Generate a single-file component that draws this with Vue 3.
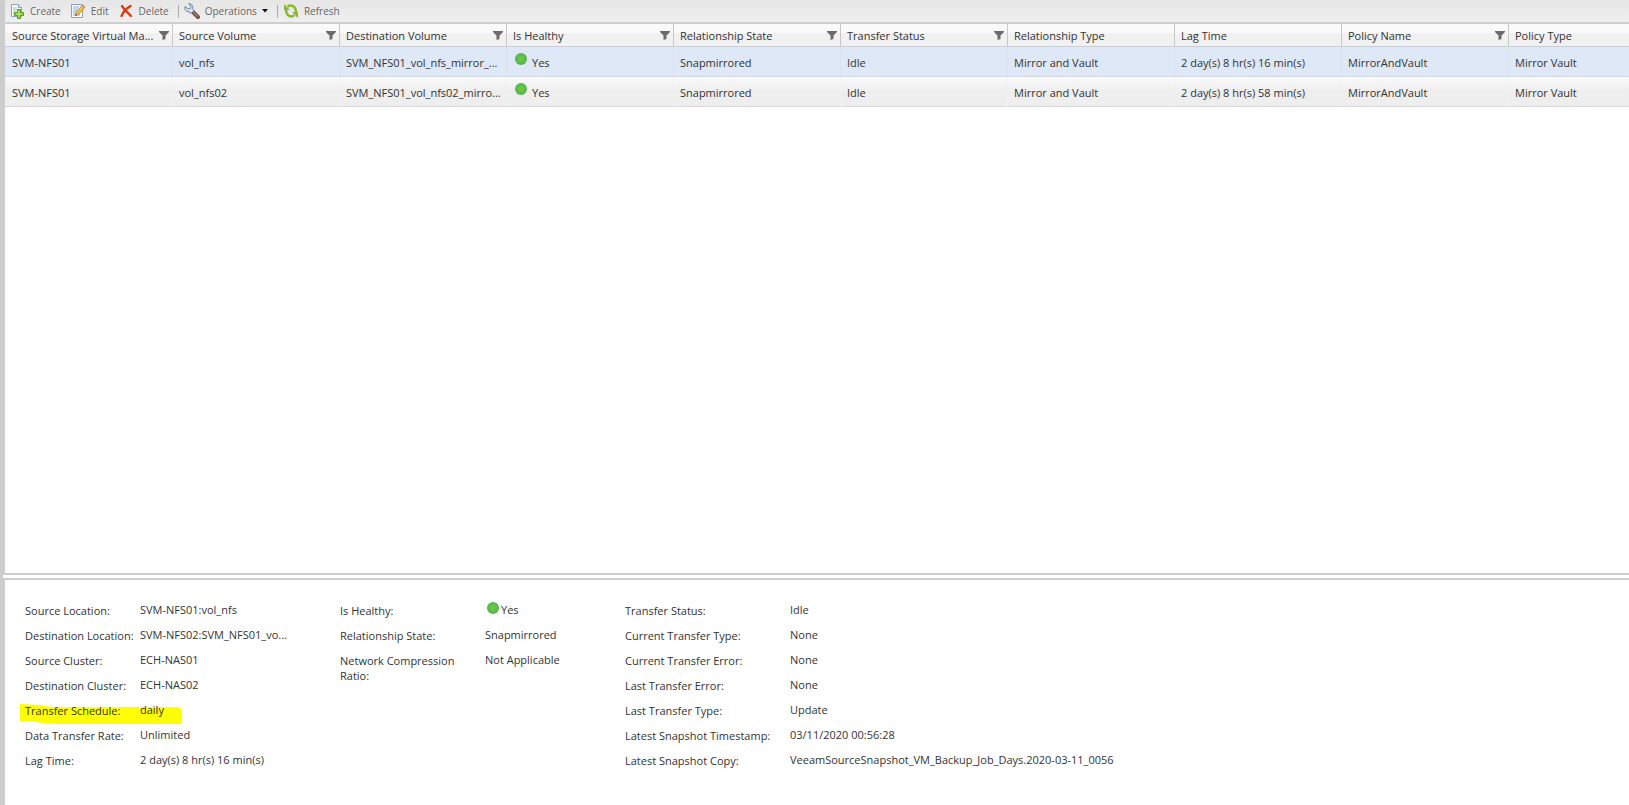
<script setup>
import { ref } from 'vue'

const columns = [
  { title: 'Source Storage Virtual Ma...', key: 'svm', filter: true },
  { title: 'Source Volume', key: 'source', filter: true },
  { title: 'Destination Volume', key: 'destination', filter: true },
  { title: 'Is Healthy', key: 'healthy', filter: true },
  { title: 'Relationship State', key: 'state', filter: true },
  { title: 'Transfer Status', key: 'status', filter: true },
  { title: 'Relationship Type', key: 'type', filter: false },
  { title: 'Lag Time', key: 'lag', filter: false },
  { title: 'Policy Name', key: 'policy', filter: true },
  { title: 'Policy Type', key: 'policyType', filter: false },
]

const rows = [
  {
    svm: 'SVM-NFS01', source: 'vol_nfs', destination: 'SVM_NFS01_vol_nfs_mirror_...', healthy: 'Yes',
    state: 'Snapmirrored', status: 'Idle', type: 'Mirror and Vault', lag: '2 day(s) 8 hr(s) 16 min(s)',
    policy: 'MirrorAndVault', policyType: 'Mirror Vault',
  },
  {
    svm: 'SVM-NFS01', source: 'vol_nfs02', destination: 'SVM_NFS01_vol_nfs02_mirro...', healthy: 'Yes',
    state: 'Snapmirrored', status: 'Idle', type: 'Mirror and Vault', lag: '2 day(s) 8 hr(s) 58 min(s)',
    policy: 'MirrorAndVault', policyType: 'Mirror Vault',
  },
]

const selected = ref(0)

const groups = [
  {
    name: 'location',
    items: [
      { label: 'Source Location:', value: 'SVM-NFS01:vol_nfs' },
      { label: 'Destination Location:', value: 'SVM-NFS02:SVM_NFS01_vo...' },
      { label: 'Source Cluster:', value: 'ECH-NAS01' },
      { label: 'Destination Cluster:', value: 'ECH-NAS02' },
      { label: 'Transfer Schedule:', value: 'daily', marked: true },
      { label: 'Data Transfer Rate:', value: 'Unlimited' },
      { label: 'Lag Time:', value: '2 day(s) 8 hr(s) 16 min(s)' },
    ],
  },
  {
    name: 'condition',
    items: [
      { label: 'Is Healthy:', value: 'Yes', dot: true },
      { label: 'Relationship State:', value: 'Snapmirrored' },
      { label: 'Network Compression Ratio:', value: 'Not Applicable' },
    ],
  },
  {
    name: 'transfer',
    items: [
      { label: 'Transfer Status:', value: 'Idle' },
      { label: 'Current Transfer Type:', value: 'None' },
      { label: 'Current Transfer Error:', value: 'None' },
      { label: 'Last Transfer Error:', value: 'None' },
      { label: 'Last Transfer Type:', value: 'Update' },
      { label: 'Latest Snapshot Timestamp:', value: '03/11/2020 00:56:28' },
      { label: 'Latest Snapshot Copy:', value: 'VeeamSourceSnapshot_VM_Backup_Job_Days.2020-03-11_0056' },
    ],
  },
]
</script>

<template>
  <main class="page">
    <div class="toolbar" role="toolbar" aria-label="Relationship actions">
      <button type="button" class="tool">
        <svg width="16" height="16" viewBox="0 0 16 16" aria-hidden="true">
          <path d="M2.500 1.500h7l3 3v9h-10z" fill="#fafcfd" stroke="#8fa0b4" />
          <path d="M9.500 1.500v3h3" fill="#dce5ee" stroke="#8fa0b4" />
          <path d="M4 5h4M4 7h5M4 9h3M4 11h2" stroke="#9db8dc" />
          <path d="M8.500 6.500h3v3h3v3h-3v3h-3v-3h-3v-3h3z" fill="#8fd03f" stroke="#5c9a23" />
          <path d="M10 8v6M7 11h6" stroke="#b8e878" />
        </svg>
        <span>Create</span>
      </button>
      <button type="button" class="tool">
        <svg width="16" height="16" viewBox="0 0 16 16" aria-hidden="true">
          <path d="M1.500 1.500h11v13h-11z" fill="#f8fafd" stroke="#8fa0b4" />
          <path d="M3 4h6M3 6h5M3 8h4M3 10h3M3 12h7" stroke="#8aaee0" />
          <path d="M5.500 12.500l1-3.500 6-7 2.500 2-6 7z" fill="#f4c545" stroke="#c58a2c" />
          <path d="M11.500 3.200l1.300-1.600 2.400 2-1.300 1.600z" fill="#e4907c" />
          <path d="M5 13l.7-2 1.300 1.100z" fill="#554433" />
        </svg>
        <span>Edit</span>
      </button>
      <button type="button" class="tool">
        <svg width="16" height="16" viewBox="0 0 16 16" aria-hidden="true">
          <path d="M4 3c1 2 6 7 9 10M12.500 3C9 5 5 9 3.500 13" fill="none" stroke="#d83a12" stroke-width="2.400" stroke-linecap="round" />
        </svg>
        <span>Delete</span>
      </button>
      <span class="divider"></span>
      <button type="button" class="tool">
        <svg width="16" height="16" viewBox="0 0 16 16" aria-hidden="true">
          <path d="M9 9l5 5" stroke="#70503f" stroke-width="4" stroke-linecap="round" />
          <path d="M9.500 9l4.500 4.500" stroke="#a78472" stroke-width="1.500" />
          <path d="M4.500.8L7 3.200 6.500 5.500 4.200 6 1 3.500C.2 6 2 9 5 8.700l2 1.800 3-3-1.500-2C9.500 2.500 7 .3 4.500.8z" fill="#dce7f1" stroke="#66809a" />
        </svg>
        <span>Operations</span>
        <svg class="caret" width="6" height="4" viewBox="0 0 6 4" aria-hidden="true"><path d="M0 0h6L3 3.500z" fill="#111" /></svg>
      </button>
      <span class="divider"></span>
      <button type="button" class="tool">
        <svg width="16" height="16" viewBox="0 0 16 16" aria-hidden="true">
          <path d="M4.500 3.800C8 1.200 12.800 3 13 9M11.500 12.200C8 14.800 3.200 13 3 7" fill="none" stroke="#8bb832" stroke-width="2.400" />
          <path d="M1 1v6h6zM15 15V9H9z" fill="#8bb832" />
        </svg>
        <span>Refresh</span>
      </button>
    </div>

    <section class="grid" aria-label="Protection relationships">
      <table>
        <thead>
          <tr>
            <th v-for="column in columns" :key="column.key" scope="col">
              <div class="heading">
                <span>{{ column.title }}</span>
                <button v-if="column.filter" type="button" class="filter" :aria-label="'Filter ' + column.title">
                  <svg width="10" height="9" viewBox="0 0 10 9" aria-hidden="true">
                    <path d="M0 0h10v1L6.500 4.500V8L3.500 9V4.500L0 1z" fill="#6c6c6c" />
                  </svg>
                </button>
              </div>
            </th>
          </tr>
        </thead>
        <tbody>
          <tr v-for="(row, index) in rows" :key="row.source" :class="{ selected: index === selected }" @click="selected = index">
            <td v-for="column in columns" :key="column.key">
              <span v-if="column.key === 'healthy'" class="health"><i class="dot"></i>{{ row.healthy }}</span>
              <template v-else>{{ row[column.key] }}</template>
            </td>
          </tr>
        </tbody>
      </table>
    </section>

    <div class="splitter"></div>

    <section class="details" aria-label="Relationship details">
      <dl v-for="group in groups" :key="group.name" :class="group.name">
        <div v-for="item in group.items" :key="item.label" class="field">
          <svg v-if="item.marked" class="marker" width="162" height="20" viewBox="0 0 162 20" aria-hidden="true">
            <path d="M0 0L18 1l14 2 20 0 30 0 40 0 37 0 3 3v14H40L22 19 10 17 0 17z" fill="#ff0" />
          </svg>
          <dt>{{ item.label }}</dt>
          <dd :class="{ healthy: item.dot }"><i v-if="item.dot" class="dot"></i>{{ item.value }}</dd>
        </div>
      </dl>
    </section>
  </main>
</template>

<style>
body {
  margin: 0;
}
</style>

<style scoped>
.page {
  display: flex;
  flex-direction: column;
  box-sizing: border-box;
  min-height: 100vh;
  border-left: 5px solid #cdcdcd;
  background: #fff;
  color: #333;
  font: 11px/15px "Open Sans", "Noto Sans", sans-serif;
}

button {
  padding: 0;
  border: 0;
  background: none;
  color: inherit;
  font: inherit;
}

.toolbar {
  display: flex;
  align-items: center;
  height: 22px;
  padding-left: 4px;
  border-bottom: 2px solid #cdcdcd;
  background: linear-gradient(#e6e6e6, #efefef);
  color: #666;
  font-size: 10px;
}

.tool {
  display: flex;
  align-items: center;
  gap: 5px;
  margin-right: 9px;
}

.tool svg {
  flex: none;
}

.divider {
  width: 1px;
  height: 13px;
  margin-right: 5px;
  background: #aaa;
}

.grid {
  flex: 1;
  overflow: hidden;
}

table {
  width: 1670px;
  table-layout: fixed;
  border-collapse: separate;
  border-spacing: 0;
}

th {
  box-sizing: border-box;
  height: 23px;
  padding: 0 3px 0 6px;
  border-left: 1px solid #c8c8c8;
  border-bottom: 1px solid #c8cdd6;
  background: linear-gradient(#fafafa 0 40%, #f1f1f1 41% 100%);
  font-weight: 400;
  text-align: left;
}

.heading {
  display: flex;
  align-items: center;
  justify-content: space-between;
  white-space: nowrap;
}

.filter {
  display: flex;
}

td {
  box-sizing: border-box;
  height: 30px;
  padding: 2px 0 0 6px;
  border-left: 1px solid #f0f0f0;
  border-bottom: 1px solid #d8d8d8;
  background: linear-gradient(#fafafa, #eee 50%);
  white-space: nowrap;
}

.selected td {
  border-left-color: #d8e2f0;
  border-bottom-color: #d0d8e4;
  background: #dfe8f6;
}

th:first-child,
td:first-child {
  padding-left: 7px;
  border-left: 0;
}

.health {
  display: flex;
  gap: 5px;
  padding-left: 2px;
}

.dot {
  flex: none;
  width: 12px;
  height: 12px;
  border-radius: 50%;
  background: radial-gradient(#6cc644 20%, #4fb455 70%);
}

.health .dot {
  margin-top: -2px;
}

.splitter {
  height: 3px;
  margin-left: -2px;
  border: solid #cdcdcd;
  border-width: 2px 0;
  background: #fff;
}

.details {
  display: flex;
  padding: 23px 20px 27px;
}

dl {
  margin: 0;
}

.field {
  position: relative;
  display: flex;
  min-height: 25px;
}

dt,
dd {
  position: relative;
  margin: 0;
}

dt {
  flex: none;
}

dd {
  margin-top: -1px;
  white-space: nowrap;
}

.location {
  width: 315px;
}

.location dt {
  width: 115px;
}

.condition {
  width: 285px;
}

.condition dt {
  width: 125px;
  padding-right: 20px;
}

.healthy {
  display: flex;
  gap: 2px;
  padding-left: 2px;
}

.transfer dt {
  width: 165px;
}

.marker {
  position: absolute;
  top: 1px;
  left: -5px;
}
</style>
